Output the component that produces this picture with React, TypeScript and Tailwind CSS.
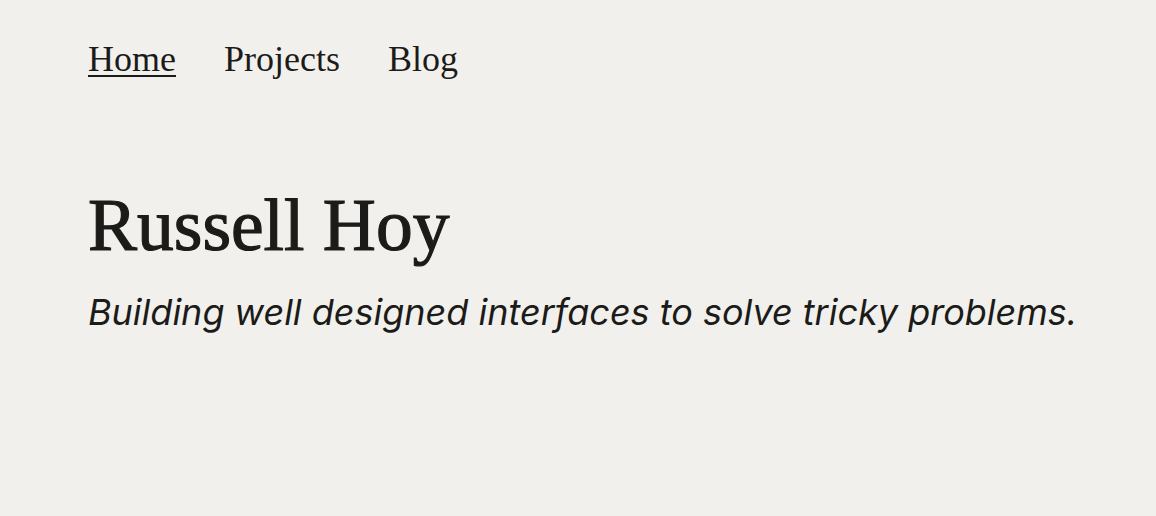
import React from 'react';

const App = () => {
  return (
    <div className="min-h-[516px] w-full bg-[#f2f0ec] text-[#1b1b19] px-[88px]">
      <nav className="flex gap-[48px] pt-[37px] text-[36px] leading-[44px] font-['Liberation_Serif',serif]">
        <a href="#" className="underline decoration-2 underline-offset-[4px]">Home</a>
        <a href="#">Projects</a>
        <a href="#">Blog</a>
      </nav>
      <main className="pt-[105px]">
        <h1 className="text-[73.5px] leading-[80px] font-['Liberation_Serif',serif] [-webkit-text-stroke:1.2px_#1b1b19]">
          Russell Hoy
        </h1>
        <p className="mt-[24px] whitespace-nowrap text-[36px] leading-[44px] italic font-['Inter',sans-serif]">
          Building well designed interfaces to solve tricky problems.
        </p>
      </main>
    </div>
  );
};

export default App;
